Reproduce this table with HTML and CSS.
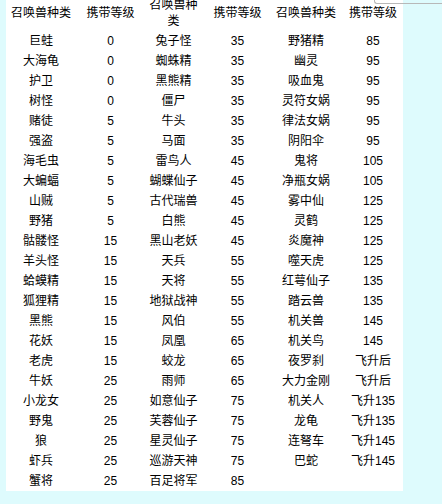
FILE: index.html
```html
<!DOCTYPE html>
<html lang="zh-CN">
<head>
<meta charset="utf-8">
<title>召唤兽携带等级</title>
<link rel="stylesheet" href="styles.css">
</head>
<body>
<div class="corner"></div>
<div class="sheet">
<table class="pets">
<colgroup>
<col class="c1"><col class="c2"><col class="c3"><col class="c4"><col class="c5"><col class="c6">
</colgroup>
<tr class="head"><td>召唤兽种类</td><td>携带等级</td><td>召唤兽种类</td><td>携带等级</td><td>召唤兽种类</td><td>携带等级</td></tr>
<tr><td>巨蛙</td><td>0</td><td>兔子怪</td><td>35</td><td>野猪精</td><td>85</td></tr>
<tr><td>大海龟</td><td>0</td><td>蜘蛛精</td><td>35</td><td>幽灵</td><td>95</td></tr>
<tr><td>护卫</td><td>0</td><td>黑熊精</td><td>35</td><td>吸血鬼</td><td>95</td></tr>
<tr><td>树怪</td><td>0</td><td>僵尸</td><td>35</td><td>灵符女娲</td><td>95</td></tr>
<tr><td>赌徒</td><td>5</td><td>牛头</td><td>35</td><td>律法女娲</td><td>95</td></tr>
<tr><td>强盗</td><td>5</td><td>马面</td><td>35</td><td>阴阳伞</td><td>95</td></tr>
<tr><td>海毛虫</td><td>5</td><td>雷鸟人</td><td>45</td><td>鬼将</td><td>105</td></tr>
<tr><td>大蝙蝠</td><td>5</td><td>蝴蝶仙子</td><td>45</td><td>净瓶女娲</td><td>105</td></tr>
<tr><td>山贼</td><td>5</td><td>古代瑞兽</td><td>45</td><td>雾中仙</td><td>125</td></tr>
<tr><td>野猪</td><td>5</td><td>白熊</td><td>45</td><td>灵鹤</td><td>125</td></tr>
<tr><td>骷髅怪</td><td>15</td><td>黑山老妖</td><td>45</td><td>炎魔神</td><td>125</td></tr>
<tr><td>羊头怪</td><td>15</td><td>天兵</td><td>55</td><td>噬天虎</td><td>125</td></tr>
<tr><td>蛤蟆精</td><td>15</td><td>天将</td><td>55</td><td>红萼仙子</td><td>135</td></tr>
<tr><td>狐狸精</td><td>15</td><td>地狱战神</td><td>55</td><td>踏云兽</td><td>135</td></tr>
<tr><td>黑熊</td><td>15</td><td>风伯</td><td>55</td><td>机关兽</td><td>145</td></tr>
<tr><td>花妖</td><td>15</td><td>凤凰</td><td>65</td><td>机关鸟</td><td>145</td></tr>
<tr><td>老虎</td><td>15</td><td>蛟龙</td><td>65</td><td>夜罗刹</td><td>飞升后</td></tr>
<tr><td>牛妖</td><td>25</td><td>雨师</td><td>65</td><td>大力金刚</td><td>飞升后</td></tr>
<tr><td>小龙女</td><td>25</td><td>如意仙子</td><td>75</td><td>机关人</td><td>飞升135</td></tr>
<tr><td>野鬼</td><td>25</td><td>芙蓉仙子</td><td>75</td><td>龙龟</td><td>飞升135</td></tr>
<tr><td>狼</td><td>25</td><td>星灵仙子</td><td>75</td><td>连弩车</td><td>飞升145</td></tr>
<tr><td>虾兵</td><td>25</td><td>巡游天神</td><td>75</td><td>巴蛇</td><td>飞升145</td></tr>
<tr><td>蟹将</td><td>25</td><td>百足将军</td><td>85</td><td></td><td></td></tr>
</table>
</div>
</body>
</html>
```
FILE: styles.css
```css
html, body {
  margin: 0;
  padding: 0;
  background: #defbfd;
}
body {
  width: 442px;
  height: 504px;
  overflow: hidden;
  position: relative;
  font-family: "Liberation Sans", "Noto Sans CJK SC", sans-serif;
  font-size: 12px;
  color: #000;
}
.sheet {
  width: 397px;
  margin-left: 6px;
  margin-top: -5px;
  background: #fff;
}
.pets {
  width: 401px;
  table-layout: fixed;
  border-collapse: collapse;
}
.pets td {
  padding: 0 1px;
  height: 20px;
  line-height: 16px;
  text-align: center;
  vertical-align: middle;
  white-space: normal;
}
.pets .head td {
  height: 36px;
}
.c1 { width: 70px; }
.c2 { width: 69px; }
.c3 { width: 57px; }
.c4 { width: 71px; }
.c5 { width: 66px; }
.c6 { width: 68px; }
.corner {
  position: absolute;
  left: 374px;
  top: -2px;
  width: 80px;
  height: 5px;
  border-left: 1px solid #b8b8b8;
  border-bottom: 1px solid #b8b8b8;
  border-bottom-left-radius: 3px;
  z-index: 2;
}
```
